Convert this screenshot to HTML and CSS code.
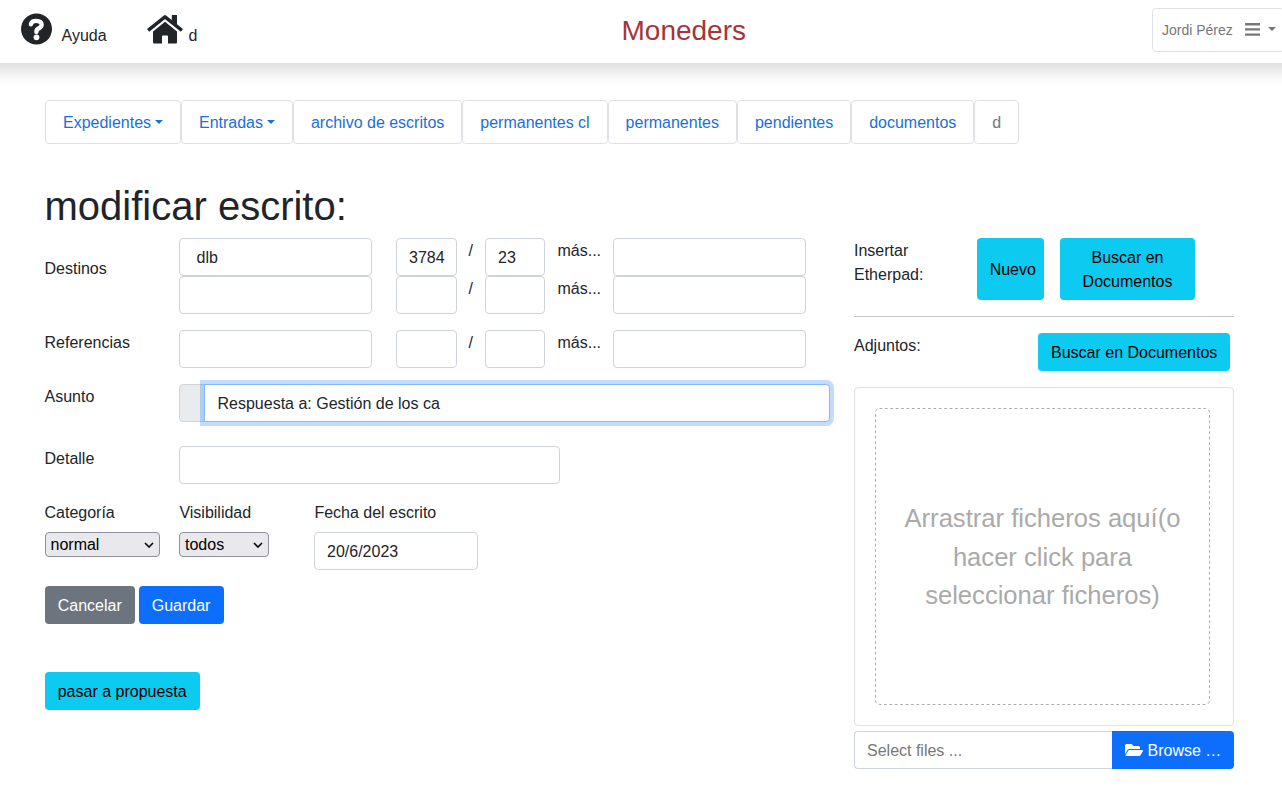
FILE: index.html
```html
<!DOCTYPE html>
<html lang="es">
<head>
<meta charset="utf-8">
<title>modificar escrito</title>
<link rel="stylesheet" href="styles.css">
</head>
<body>
<header class="topbar">
  <div class="topbar-links">
    <a class="help"><svg class="icon-help" viewBox="8 8 496 496"><path d="M504 256c0 136.997-111.043 248-248 248S8 392.997 8 256C8 119.083 119.043 8 256 8s248 111.083 248 248z"/><path class="icon-help-mark" d="M166 182Q176 126 248 126Q338 126 338 188Q338 226 292 246Q254 262 254 302"/><circle class="icon-help-dot" cx="256" cy="388" r="46"/></svg><span>Ayuda</span></a>
    <a class="home"><svg class="icon-home" viewBox="0 0 36 29"><path d="M24.800 0h5.200v10.500l-5.200-4.400z"/><path class="icon-home-roof" d="M1.100 15.400L18 1.900l16.900 13.500"/><path d="M18 6.700L30 16.500V27.600q0 1-1 1H21V21.400q0-1-1-1H16q-1 0-1 1V28.600H7q-1 0-1-1V16.500z"/></svg><span>d</span></a>
  </div>
  <div class="brand">Moneders</div>
  <div class="user"><span>Jordi Pérez</span><svg class="icon-bars" viewBox="0 0 15 13"><path d="M0 0h15v2.400H0zM0 5.200h15v2.400H0zM0 10.400h15v2.400H0z"/></svg><i class="caret"></i></div>
</header>
<main class="page">
  <nav class="tabs">
    <a class="tab">Expedientes<i class="caret"></i></a><a class="tab">Entradas<i class="caret"></i></a><a class="tab">archivo de escritos</a><a class="tab">permanentes cl</a><a class="tab">permanentes</a><a class="tab">pendientes</a><a class="tab">documentos</a><a class="tab tab-muted">d</a>
  </nav>
  <h1 class="title">modificar escrito:</h1>
  <div class="columns">
    <form class="form">
      <div class="row">
        <label class="label label-low">Destinos</label>
        <div class="entries">
          <div class="entry"><div class="field field-wide">dlb</div><div class="field">3784</div><span class="slash">/</span><div class="field">23</div><span class="more">más...</span><div class="field"></div></div>
          <div class="entry"><div class="field"></div><div class="field"></div><span class="slash">/</span><div class="field"></div><span class="more">más...</span><div class="field"></div></div>
        </div>
      </div>
      <div class="row">
        <label class="label">Referencias</label>
        <div class="entry"><div class="field"></div><div class="field"></div><span class="slash">/</span><div class="field"></div><span class="more">más...</span><div class="field"></div></div>
      </div>
      <div class="row">
        <label class="label">Asunto</label>
        <div class="subject"><div class="addon"></div><div class="field subject-field">Respuesta a: Gestión de los ca</div></div>
      </div>
      <div class="row row-detail">
        <label class="label">Detalle</label>
        <div class="field detail-field"></div>
      </div>
      <div class="row row-options">
        <div class="option"><label class="label">Categoría</label><div class="select select-cat">normal<svg class="chevron" viewBox="0 0 10 6"><path d="M1 1l4 4 4-4"/></svg></div></div>
        <div class="option"><label class="label">Visibilidad</label><div class="select select-vis">todos<svg class="chevron" viewBox="0 0 10 6"><path d="M1 1l4 4 4-4"/></svg></div></div>
        <div class="option"><label class="label">Fecha del escrito</label><div class="field date-field">20/6/2023</div></div>
      </div>
      <div class="actions"><a class="btn btn-secondary">Cancelar</a><a class="btn btn-primary">Guardar</a></div>
      <div class="actions actions-last"><a class="btn btn-info">pasar a propuesta</a></div>
    </form>
    <aside class="side">
      <div class="etherpad"><span class="label etherpad-label">Insertar Etherpad:</span><a class="btn btn-info btn-new">Nuevo</a><a class="btn btn-info btn-search">Buscar en Documentos</a></div>
      <div class="attach"><span class="label">Adjuntos:</span><a class="btn btn-info">Buscar en Documentos</a></div>
      <div class="preview"><div class="dropzone"><svg class="dropzone-outline" viewBox="0 0 335 297"><rect x=".5" y=".5" width="334" height="296" rx="4"/></svg><span>Arrastrar ficheros aquí(o hacer click para seleccionar ficheros)</span></div></div>
      <div class="picker"><div class="picker-name">Select files ...</div><a class="picker-browse"><svg class="icon-folder" viewBox="0 64 576 384"><path d="M572.694 292.093L500.270 416.248A63.997 63.997 0 0 1 444.989 448H45.025c-18.523 0-30.064-20.093-20.731-36.093l72.424-124.155A64 64 0 0 1 152 256h399.964c18.523 0 30.064 20.093 20.730 36.093zM152 224h328v-48c0-26.510-21.490-48-48-48H272l-64-64H48C21.490 64 0 85.490 0 112v278.046l69.077-118.418C86.214 242.250 117.989 224 152 224z"/></svg><span>Browse …</span></a></div>
    </aside>
  </div>
</main>
</body>
</html>
```

FILE: styles.css
```css
* { box-sizing: border-box; }
body {
  margin: 0;
  font: 16px/24px "Liberation Sans", Arial, sans-serif;
  color: #212529;
  background: #fff;
  overflow: hidden;
}
svg { fill: currentColor; display: block; }

.topbar {
  height: 63px;
  display: grid;
  grid-template-columns: 621.500px auto 1fr;
  align-items: start;
  box-shadow: 0 8px 16px rgba(0, 0, 0, .15);
  clip-path: inset(0 0 -30px 0);
  margin: 0 -16px;
  padding: 0 16px;
}
.topbar-links { display: flex; padding: 13px 0 0 21px; }
.help, .home { display: flex; align-items: flex-start; }
.help span, .home span { margin-top: 11px; }
.help { gap: 9.500px; }
.home { gap: 6px; margin-left: 40px; }
.icon-help { width: 31px; height: 32px; }
.icon-help-mark { fill: none; stroke: #fff; stroke-width: 70; stroke-linejoin: round; stroke-linecap: round; }
.icon-help-dot { fill: #fff; }
.icon-home { width: 36px; height: 29px; margin-top: 2px; }
.icon-home-roof { fill: none; stroke: currentColor; stroke-width: 3.500; stroke-linecap: butt; stroke-linejoin: round; }
.brand { margin-top: 14px; font-size: 28px; line-height: 34px; color: #a33539; }
.user {
  justify-self: end;
  margin: 8px -3px 0 0;
  width: 133px;
  height: 44px;
  border: 1px solid #dee2e6;
  border-radius: 4px;
  padding-left: 9px;
  display: flex;
  align-items: center;
  font-size: 14px;
  color: #777;
  white-space: nowrap;
}
.icon-bars { width: 15px; height: 13px; margin: -2px 0 0 12px; }
.caret {
  border-top: 4.8px solid;
  border-left: 4.8px solid transparent;
  border-right: 4.8px solid transparent;
  margin-left: 4px;
}
.user .caret { margin: -2px 0 0 8px; border-width: 4px 4px 0; }

.page { padding: 37px 48px 0 45px; }
.tabs { display: flex; }
.tab {
  height: 44px;
  padding: 2px 16.980px 0;
  border: 1px solid #dee2e6;
  border-radius: 4px;
  display: flex;
  align-items: center;
  color: #1a6fd8;
  white-space: nowrap;
}
.tab .caret { margin-top: -2px; }
.tab-muted { color: #777; }
.title { margin: 38px 0 8px -.5px; font-size: 40px; line-height: 48px; font-weight: 400; }
.columns { display: grid; grid-template-columns: 785px 380px; gap: 24px; }

.row { display: grid; grid-template-columns: 134px 1fr; margin-bottom: 16px; }
.label { padding-top: 1px; margin-bottom: -1px; }
.row > .label { margin-left: -.5px; }
.label-low { padding-top: 19px; }
.entry { display: grid; grid-template-columns: 193px 24px 61px 28px 60px 68px 193px; }
.entry .field:nth-child(1) { grid-column: 1; }
.entry .field:nth-child(2) { grid-column: 3; }
.slash { padding: 1px 0 0 11.500px; }
.more { padding: 1px 0 0 12.500px; }
.field {
  height: 38px;
  padding: 7px 12px 5px;
  border: 1px solid #ced4da;
  border-radius: 4px;
  background: #fff;
  white-space: nowrap;
}
.field-wide { padding-left: 16.500px; }
.subject { display: flex; }
.addon { width: 26px; margin-right: -1px; border: 1px solid #ced4da; border-radius: 4px 0 0 4px; background: #e9ecef; }
.subject-field { flex: 1; border-color: #86b7fe; border-radius: 0 4px 4px 0; box-shadow: 0 0 0 4px rgba(13, 110, 253, .25); padding-left: 12.500px; }
.row-detail { margin-top: 24px; }
.detail-field { width: 381px; }
.row-options { grid-template-columns: 134px 135px 164px; }
.option { display: flex; flex-direction: column; gap: 8px; white-space: nowrap; }
.option .label { padding-left: .4px; }
.option:first-child .label { margin-left: -.9px; }
.select {
  height: 25px;
  padding: 0 5px;
  display: flex;
  align-items: center;
  justify-content: space-between;
  border: 1px solid #8f8f9d;
  border-radius: 4px;
  background: #e9e9ed;
  color: #000;
}
.select-cat { width: 115px; padding-left: 4.500px; }
.select-vis { width: 90px; }
.chevron { width: 10px; height: 6px; fill: none; stroke: #000; stroke-width: 1.6; }
.actions { display: flex; gap: 4px; }
.actions-last { margin-top: 48px; }
.btn { padding: 8px 13.300px 6px 12.700px; border-radius: 4px; text-align: center; white-space: nowrap; }
.btn-secondary { background: #6c757d; color: #fff; }
.btn-primary { background: #0d6efd; color: #fff; }
.btn-info { background: #0dcaf0; color: #000; }

.etherpad {
  display: grid;
  grid-template-columns: 123px 67px 151px;
  padding-bottom: 16px;
  border-bottom: 1px solid #c4c6c8;
}
.etherpad-label { width: 80px; }
.btn-new { padding: 20px 0 18px 4.500px; }
.btn-search { margin-left: 16px; padding: 8px 13px 6px; white-space: normal; }
.attach { display: flex; justify-content: space-between; padding: 16px 4px 16px 0; }
.attach .btn { padding: 8px 12.700px 6px 13px; }
.preview { height: 339px; padding: 20px 23px 20px 20px; border: 1px solid #dee2e6; border-radius: 4px; }
.dropzone {
  position: relative;
  height: 297px;
  padding: 1px 21px 0;
  display: flex;
  align-items: center;
  text-align: center;
  font-size: 25.600px;
  line-height: 38.400px;
  color: #aaa;
}
.dropzone-outline { position: absolute; inset: 0; width: 100%; height: 100%; fill: none; stroke: #aaa; stroke-dasharray: 2.700 2.700; }
.picker { display: flex; height: 38px; margin-top: 5px; }
.picker-name { flex: 1; padding: 7px 12px 5px; border: 1px solid #ced4da; border-right: 0; border-radius: 4px 0 0 4px; color: #777; }
.picker-browse { width: 122px; padding-left: 13px; display: flex; align-items: center; gap: 4.500px; background: #0d6efd; color: #fff; border-radius: 0 4px 4px 0; white-space: nowrap; }
.picker-browse span { margin-top: 2px; }
.icon-folder { width: 18px; height: 12px; }
```
